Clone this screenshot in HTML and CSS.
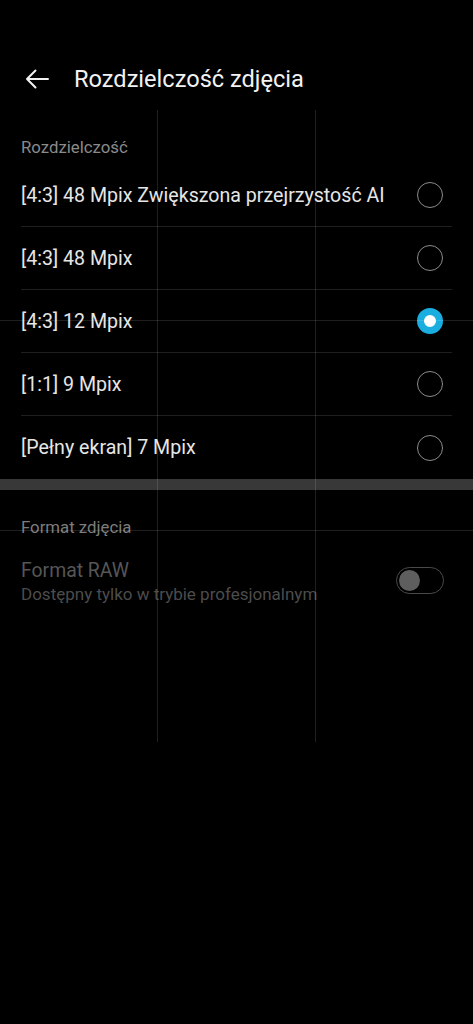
FILE: index.html
```html
<!DOCTYPE html>
<html lang="pl">
<head>
<meta charset="utf-8">
<title>Rozdzielczość zdjęcia</title>
<link rel="stylesheet" href="styles.css">
</head>
<body>
<div class="screen">
  <header class="appbar">
    <svg class="back" width="24" height="20" viewBox="0 0 24 20" aria-hidden="true">
      <path d="M23 10H2M10.5 1.5L2 10l8.5 8.5" fill="none" stroke="#f2f2f2" stroke-width="2" stroke-linecap="round" stroke-linejoin="round"/>
    </svg>
    <h1 class="title">Rozdzielczość zdjęcia</h1>
  </header>

  <div class="section-title">Rozdzielczość</div>
  <ul class="list">
    <li class="row"><span class="label">[4:3] 48 Mpix Zwiększona przejrzystość AI</span><span class="radio"></span></li>
    <li class="row"><span class="label">[4:3] 48 Mpix</span><span class="radio"></span></li>
    <li class="row"><span class="label">[4:3] 12 Mpix</span><span class="radio checked"></span></li>
    <li class="row"><span class="label">[1:1] 9 Mpix</span><span class="radio"></span></li>
    <li class="row last"><span class="label">[Pełny ekran] 7 Mpix</span><span class="radio"></span></li>
  </ul>

  <div class="band"></div>

  <div class="section-title second">Format zdjęcia</div>
  <div class="setting">
    <div class="setting-text">
      <div class="setting-name">Format RAW</div>
      <div class="setting-desc">Dostępny tylko w trybie profesjonalnym</div>
    </div>
    <span class="switch"><span class="knob"></span></span>
  </div>

  <div class="grid" aria-hidden="true">
    <span class="gl v v1"></span>
    <span class="gl v v2"></span>
    <span class="gl h h1"></span>
    <span class="gl h h2"></span>
  </div>
</div>
</body>
</html>
```

FILE: styles.css
```css
* { box-sizing: border-box; }
html, body {
  margin: 0;
  padding: 0;
  background: #000;
}
body {
  font-family: Roboto, "Noto Sans", "Liberation Sans", sans-serif;
  color: #e8e8e8;
}
.screen {
  position: relative;
  width: 473px;
  height: 1024px;
  background: #000;
  overflow: hidden;
}
.appbar {
  display: flex;
  align-items: center;
  height: 56px;
  margin-top: 51px;
  padding-left: 25px;
}
.back { display: block; flex: none; }
.title {
  margin: 0 0 0 25px;
  font-size: 23.6px;
  font-weight: 400;
  color: #f2f2f2;
  letter-spacing: 0;
}
.section-title {
  padding: 30px 21px 7px;
  font-size: 16.8px;
  line-height: 20px;
  color: #8a8a8a;
}
.section-title.second {
  padding-top: 27px;
  padding-bottom: 6px;
  color: #7c7c7c;
}
.list {
  list-style: none;
  margin: 0 21px;
  padding: 0;
}
.row {
  display: flex;
  align-items: center;
  justify-content: space-between;
  height: 63px;
  padding-right: 9px;
  border-bottom: 1px solid #1f1f1f;
}
.row.last { border-bottom: none; }
.label {
  font-size: 19.6px;
  color: #e6e6e6;
  white-space: nowrap;
}
.radio {
  flex: none;
  width: 26px;
  height: 26px;
  border-radius: 50%;
  border: 1.5px solid #8c8c8c;
}
.radio.checked {
  border: 7px solid #1aaee0;
  background: #ffffff;
}
.band {
  height: 11px;
  background: #383838;
}
.setting {
  display: flex;
  align-items: center;
  justify-content: space-between;
  padding: 16px 29px 0 21px;
}
.setting-name {
  font-size: 19.4px;
  line-height: 24px;
  color: #565656;
}
.setting-desc {
  font-size: 17px;
  line-height: 20px;
  color: #4c4c4c;
  margin-top: 1px;
}
.switch {
  flex: none;
  position: relative;
  width: 48px;
  height: 27px;
  border-radius: 14px;
  border: 1.5px solid #4a4a4a;
  margin-top: -2px;
}
.knob {
  position: absolute;
  left: 2px;
  top: 1.5px;
  width: 21px;
  height: 21px;
  border-radius: 50%;
  background: #5e5e5e;
}
.grid {
  position: absolute;
  left: 0;
  top: 110px;
  width: 473px;
  height: 632px;
  pointer-events: none;
}
.gl {
  position: absolute;
  background: rgba(255, 255, 255, 0.12);
}
.gl.v { top: 0; bottom: 0; width: 1px; }
.gl.v1 { left: 157px; }
.gl.v2 { left: 315px; }
.gl.h { left: 0; right: 0; height: 1px; }
.gl.h1 { top: 210px; }
.gl.h2 { top: 420px; }
```
